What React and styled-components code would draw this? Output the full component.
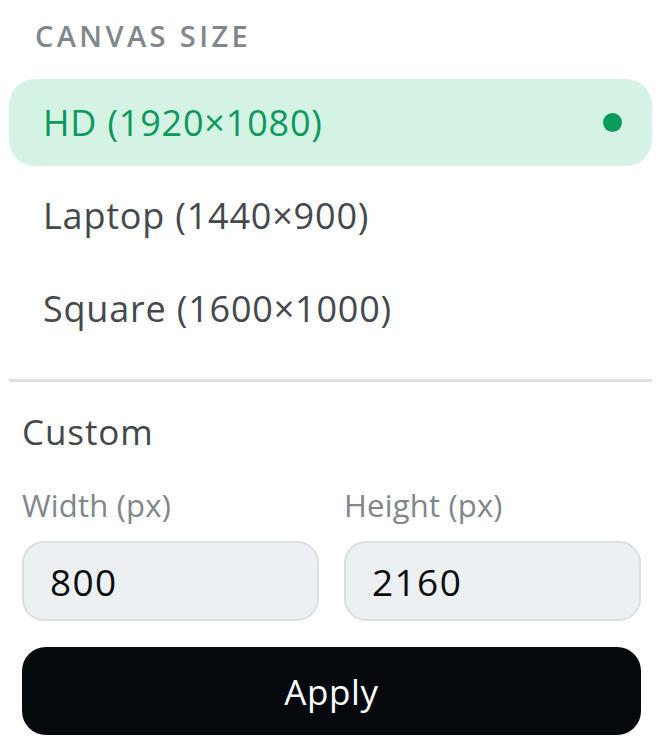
import React from "react";
import styled, { createGlobalStyle } from "styled-components";

const GlobalStyle = createGlobalStyle`
	html, body {
		margin: 0;
		padding: 0;
		background: #ffffff;
	}
	body {
		font-family: "Open Sans", "Noto Sans", Arial, sans-serif;
		-webkit-font-smoothing: antialiased;
	}
	* {
		box-sizing: border-box;
	}
`;

const Panel = styled.div`
	width: 664px;
	padding: 16px 12px 0 9px;
`;

const Heading = styled.div`
	height: 40px;
	line-height: 40px;
	margin: 0 0 23px 26px;
	font-size: 29px;
	font-weight: 600;
	letter-spacing: 3.4px;
	color: #80868b;
	text-transform: uppercase;
`;

const Options = styled.ul`
	list-style: none;
	margin: 0;
	padding: 0;
	display: flex;
	flex-direction: column;
	gap: 6px;
`;

const Option = styled.li`
	height: 87px;
	display: flex;
	align-items: center;
	justify-content: space-between;
	padding: 0 30px 0 34px;
	border-radius: 26px;
	font-size: 36px;
	letter-spacing: 0.8px;
	color: ${(p) => (p.$active ? "#0b9a5a" : "#45494d")};
	background: ${(p) => (p.$active ? "#d4f3e4" : "transparent")};
	cursor: pointer;
`;

const Dot = styled.span`
	width: 19px;
	height: 19px;
	border-radius: 50%;
	background: #089c5c;
`;

const Divider = styled.hr`
	border: 0;
	height: 3px;
	margin: 27px 0 0;
	background: #dfe1e3;
`;

const Custom = styled.div`
	padding: 0 11px 0 13px;
`;

const CustomTitle = styled.div`
	margin-top: 26px;
	height: 48px;
	line-height: 48px;
	font-size: 35px;
	letter-spacing: 0.9px;
	color: #43474b;
`;

const Fields = styled.div`
	display: grid;
	grid-template-columns: 1fr 1fr;
	gap: 25px;
	margin-top: 28px;
`;

const Field = styled.label`
	display: flex;
	flex-direction: column;
	gap: 15px;
`;

const FieldLabel = styled.span`
	height: 42px;
	line-height: 42px;
	font-size: 31px;
	letter-spacing: 0.2px;
	color: #80868b;
`;

const Input = styled.input`
	width: 100%;
	height: 80px;
	padding: 0 24px 0 26px;
	border: 2.5px solid #dadfe2;
	border-radius: 22px;
	background: #edf0f3;
	font-family: inherit;
	font-size: 37px;
	letter-spacing: 1.4px;
	color: #0a0c0e;
	outline: none;
`;

const ApplyButton = styled.button`
	display: block;
	width: 100%;
	height: 88px;
	margin-top: 26px;
	border: 0;
	border-radius: 24px;
	background: #05080d;
	color: #ffffff;
	font-family: inherit;
	font-size: 35px;
	letter-spacing: 0.6px;
	cursor: pointer;
`;

const presets = [
	{ label: "HD (1920×1080)", active: true },
	{ label: "Laptop (1440×900)" },
	{ label: "Square (1600×1000)" },
];

export default function App() {
	return (
		<>
			<GlobalStyle />
			<Panel>
				<Heading>Canvas size</Heading>
				<Options>
					{presets.map((p) => (
						<Option key={p.label} $active={p.active}>
							{p.label}
							{p.active && <Dot />}
						</Option>
					))}
				</Options>
				<Divider />
				<Custom>
					<CustomTitle>Custom</CustomTitle>
					<Fields>
						<Field>
							<FieldLabel>Width (px)</FieldLabel>
							<Input defaultValue="800" />
						</Field>
						<Field>
							<FieldLabel>Height (px)</FieldLabel>
							<Input defaultValue="2160" />
						</Field>
					</Fields>
					<ApplyButton>Apply</ApplyButton>
				</Custom>
			</Panel>
		</>
	);
}
